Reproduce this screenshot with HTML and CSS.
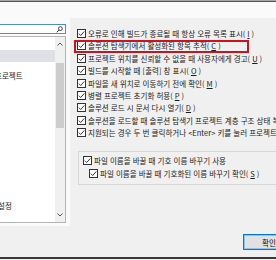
FILE: index.html
```html
<!DOCTYPE html>
<html lang="ko">
<head>
  <meta charset="UTF-8">
  <meta name="viewport" content="width=device-width, initial-scale=1.0">
  <title>옵션</title>
  <link rel="stylesheet" href="styles.css">
</head>
<body>
  <div class="titlebar"></div>

  <div class="main">
    <aside class="nav">
      <div class="search">
        <svg class="search-icon" width="7" height="7" viewBox="0 0 7 7"><circle cx="4.4" cy="2.6" r="1.9" fill="none" stroke="#333" stroke-width="0.9"/><line x1="3" y1="4" x2="0.8" y2="6.3" stroke="#333" stroke-width="1"/></svg>
      </div>
      <div class="tree">
        <div class="tree-list">
          <div class="tree-item selected"></div>
          <div class="tree-item project"><span>프로젝트</span></div>
          <div class="tree-item settings"><span>설정</span></div>
        </div>
        <div class="scrollbar">
          <div class="arrow"><svg width="6" height="4" viewBox="0 0 6 4"><path d="M0.5 3.5 L3 1 L5.5 3.5" fill="none" stroke="#555" stroke-width="1"/></svg></div>
          <div class="thumb"></div>
          <div class="arrow down"><svg width="6" height="4" viewBox="0 0 6 4"><path d="M0.5 0.5 L3 3 L5.5 0.5" fill="none" stroke="#555" stroke-width="1"/></svg></div>
        </div>
      </div>
    </aside>

    <section class="options">
      <label class="opt"><span class="box"><svg viewBox="0 0 7 7"><path d="M0.8 3.6 L2.7 5.5 L6.3 1.4" fill="none" stroke="#222" stroke-width="0.9"/></svg></span>오류로 인해 빌드가 종료될 때 항상 오류 목록 표시(<u>I</u>)</label>
      <label class="opt marked"><span class="box"><svg viewBox="0 0 7 7"><path d="M0.8 3.6 L2.7 5.5 L6.3 1.4" fill="none" stroke="#222" stroke-width="0.9"/></svg></span>솔루션 탐색기에서 활성화된 항목 추적(<u>C</u>)<span class="mark"></span></label>
      <label class="opt"><span class="box"><svg viewBox="0 0 7 7"><path d="M0.8 3.6 L2.7 5.5 L6.3 1.4" fill="none" stroke="#222" stroke-width="0.9"/></svg></span>프로젝트 위치를 신뢰할 수 없을 때 사용자에게 경고(<u>U</u>)</label>
      <label class="opt"><span class="box"><svg viewBox="0 0 7 7"><path d="M0.8 3.6 L2.7 5.5 L6.3 1.4" fill="none" stroke="#222" stroke-width="0.9"/></svg></span>빌드를 시작할 때 [출력] 창 표시(<u>O</u>)</label>
      <label class="opt"><span class="box"><svg viewBox="0 0 7 7"><path d="M0.8 3.6 L2.7 5.5 L6.3 1.4" fill="none" stroke="#222" stroke-width="0.9"/></svg></span>파일을 새 위치로 이동하기 전에 확인(<u>M</u>)</label>
      <label class="opt"><span class="box"><svg viewBox="0 0 7 7"><path d="M0.8 3.6 L2.7 5.5 L6.3 1.4" fill="none" stroke="#222" stroke-width="0.9"/></svg></span>병렬 프로젝트 초기화 허용(<u>P</u>)</label>
      <label class="opt"><span class="box"><svg viewBox="0 0 7 7"><path d="M0.8 3.6 L2.7 5.5 L6.3 1.4" fill="none" stroke="#222" stroke-width="0.9"/></svg></span>솔루션 로드 시 문서 다시 열기(<u>D</u>)</label>
      <label class="opt"><span class="box"><svg viewBox="0 0 7 7"><path d="M0.8 3.6 L2.7 5.5 L6.3 1.4" fill="none" stroke="#222" stroke-width="0.9"/></svg></span>솔루션을 로드할 때 솔루션 탐색기 프로젝트 계층 구조 상태 복원(<u>S</u>)</label>
      <label class="opt"><span class="box"><svg viewBox="0 0 7 7"><path d="M0.8 3.6 L2.7 5.5 L6.3 1.4" fill="none" stroke="#222" stroke-width="0.9"/></svg></span>지원되는 경우 두 번 클릭하거나 &lt;Enter&gt; 키를 눌러 프로젝트 파일 편집(<u>E</u>)</label>

      <div class="group">
        <label class="opt"><span class="box"><svg viewBox="0 0 7 7"><path d="M0.8 3.6 L2.7 5.5 L6.3 1.4" fill="none" stroke="#222" stroke-width="0.9"/></svg></span>파일 이름을 바꿀 때 기호 이름 바꾸기 사용</label>
        <label class="opt sub"><span class="box"><svg viewBox="0 0 7 7"><path d="M0.8 3.6 L2.7 5.5 L6.3 1.4" fill="none" stroke="#222" stroke-width="0.9"/></svg></span>파일 이름을 바꿀 때 기호화된 이름 바꾸기 확인(<u>S</u>)</label>
      </div>
    </section>
  </div>

  <footer class="footer">
    <button class="btn">확인</button>
  </footer>
  <div class="bottomline"></div>
</body>
</html>
```

FILE: styles.css
```css
* { box-sizing: border-box; margin: 0; padding: 0; }
body {
  width: 276px;
  height: 260px;
  overflow: hidden;
  background: #f0f0f0;
  font-family: "Noto Sans CJK KR", "Malgun Gothic", sans-serif;
  font-size: 7.5px;
  color: #1a1a1a;
}

.titlebar {
  height: 2px;
  border-top: 1px solid #a8a8a8;
  border-bottom: 1px solid #555;
}

.main {
  display: flex;
  height: 224px;
  background: #fafafa;
}

/* left: search + tree */
.nav {
  width: 66px;
  flex: none;
  padding-top: 22px;
}
.search {
  margin-left: -2px;
  width: 68px;
  height: 10px;
  border: 1px solid #4f8fc0;
  background: #fff;
  display: flex;
  justify-content: flex-end;
  align-items: center;
  padding-right: 2px;
}
.search-icon { display: block; }

.tree {
  margin: 2px 0 0 -2px;
  width: 68px;
  height: 187px;
  border: 1px solid #b4b4b4;
  background: #fff;
  display: flex;
}
.tree-list {
  flex: 1;
  display: flex;
  flex-direction: column;
  padding-top: 13px;
  overflow: hidden;
  white-space: nowrap;
}
.tree-item {
  height: 12px;
  line-height: 12px;
}
.tree-item.selected { background: #dfdfe6; }
.tree-item.project { margin-top: 8px; }
.tree-item.project span { margin-left: -4px; }
.tree-item.settings { margin-top: auto; margin-bottom: 10px; }
.tree-item.settings span { margin-left: -1px; }

.scrollbar {
  width: 10px;
  flex: none;
  background: #f0f0f0;
  display: flex;
  flex-direction: column;
  align-items: center;
}
.arrow {
  height: 14px;
  display: flex;
  align-items: center;
  justify-content: center;
}
.arrow svg { display: block; }
.arrow.down { margin-top: auto; }
.thumb {
  width: 8px;
  height: 65px;
  margin-top: 12px;
  background: #cdcdcd;
}

/* right: option list */
.options {
  flex: 1;
  margin: 16px 0 0 4px;
  padding: 9.3px 0 0 7px;
  background: #f0f0f0;
  white-space: nowrap;
  overflow: hidden;
}
.opt {
  display: flex;
  align-items: center;
  gap: 2px;
  height: 12.4px;
  position: relative;
}
.box {
  flex: none;
  width: 9px;
  height: 9px;
  border: 1px solid #333;
  background: #fff;
  display: flex;
  align-items: center;
  justify-content: center;
}
.box svg { width: 7px; height: 7px; display: block; }
u { text-decoration: underline; text-underline-offset: 1px; }

.mark {
  position: absolute;
  left: -3px;
  top: 0.3px;
  width: 175px;
  height: 13px;
  border: 2px solid #d0101c;
}

.group {
  margin: 12px -30px 0 1px;
  height: 34px;
  border: 1px solid #d8d8d8;
  padding: 2.5px 0 0 4px;
}
.group .sub {
  margin-left: 6px;
  height: 13px;
}

/* footer */
.footer {
  height: 31px;
  padding-top: 8px;
  display: flex;
  justify-content: flex-end;
}
.btn {
  flex: none;
  width: 52px;
  height: 16px;
  margin-right: -19px;
  border: 1px solid #0078d7;
  box-shadow: inset 0 0 0 1px #8cc2ec;
  background: #e1e1e1;
  font-family: inherit;
  font-size: 7.5px;
  color: #111;
}

.bottomline {
  height: 3px;
  border-top: 2px solid #3a3a3a;
}
```
